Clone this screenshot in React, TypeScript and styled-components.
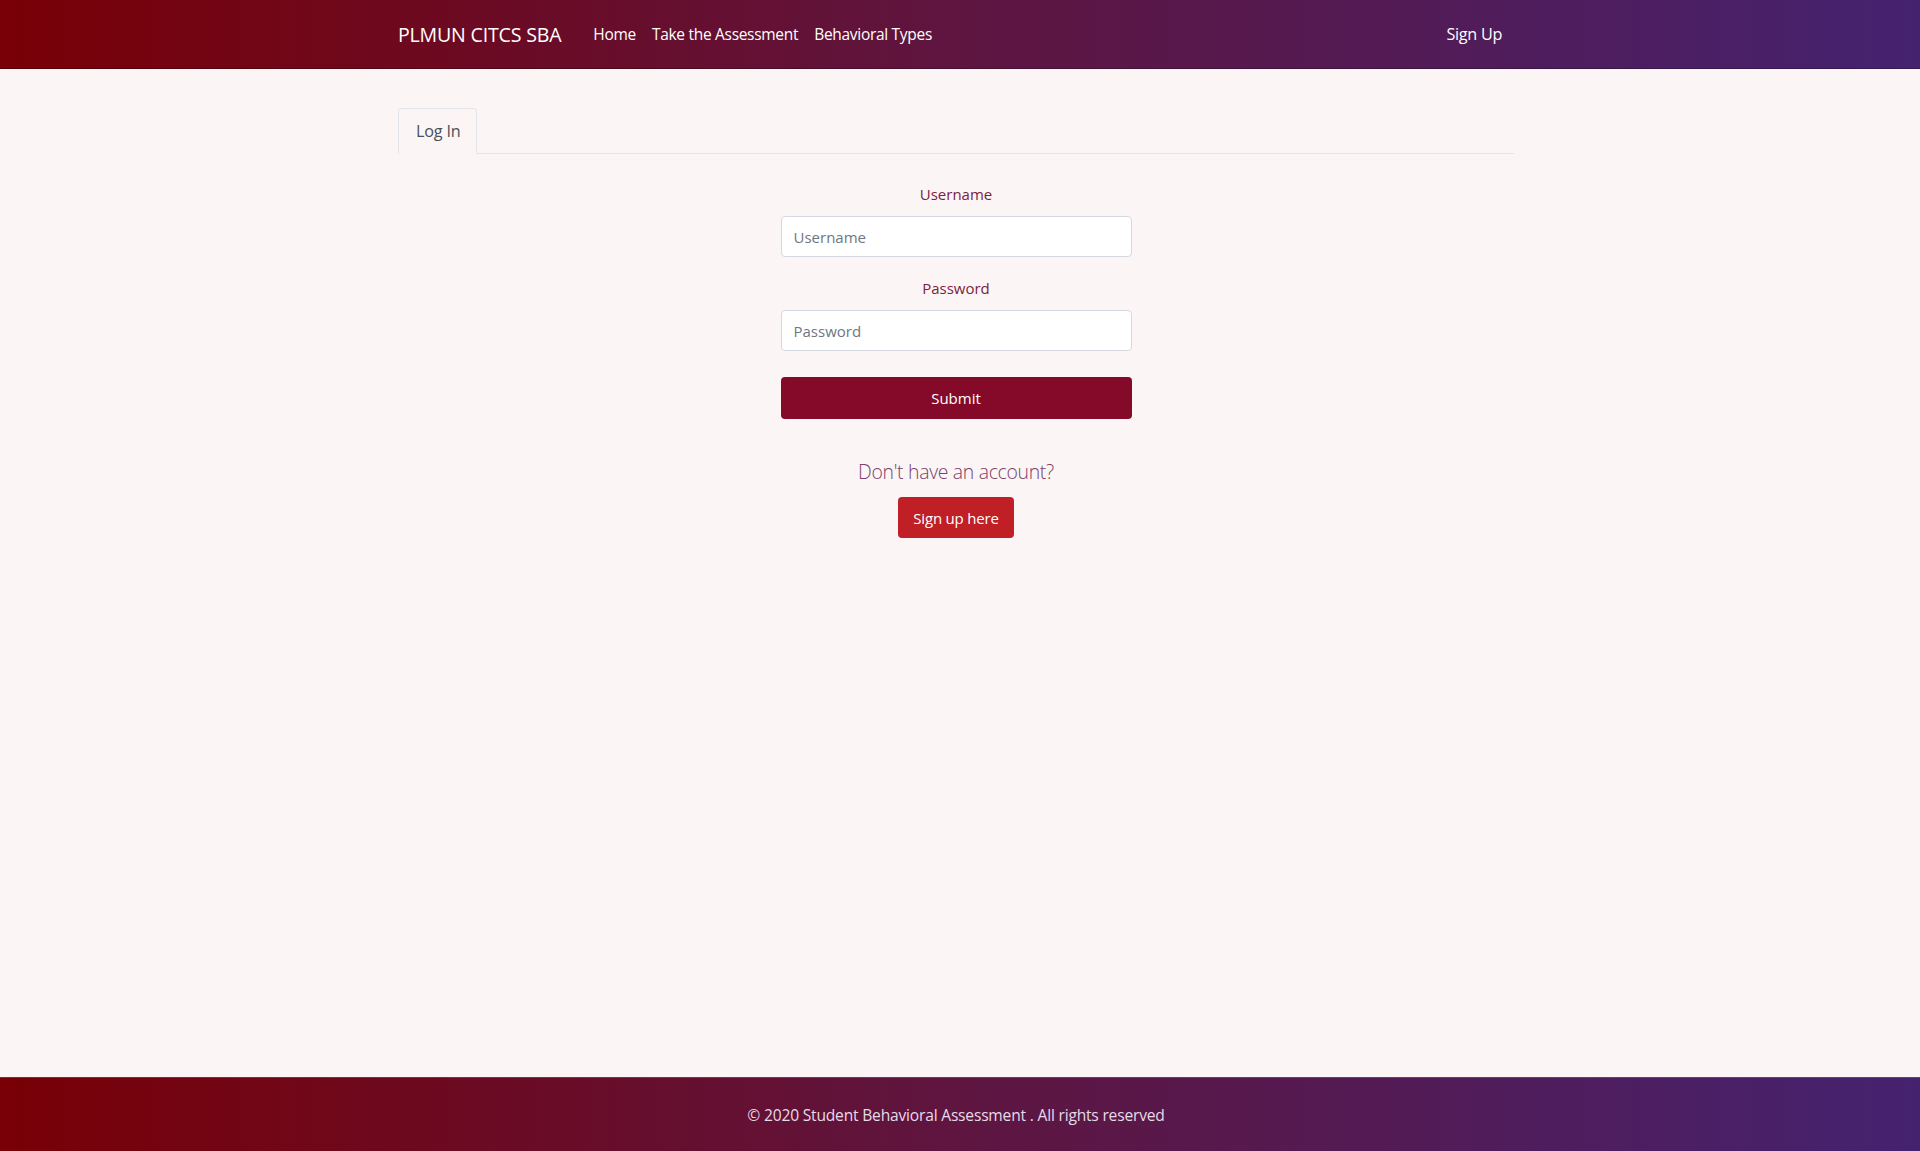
import React from "react";
import styled, { createGlobalStyle } from "styled-components";

const GlobalStyle = createGlobalStyle`
  html, body { margin: 0; padding: 0; }
  body {
    background: #fcf5f5;
    font-family: "Open Sans", "Noto Sans", Arial, sans-serif;
    font-size: 15px;
    color: #212529;
  }
  * { box-sizing: border-box; }
`;

const gradient = "linear-gradient(90deg, #780006 0%, #5e1540 50%, #45226f 100%)";

const Page = styled.div`
  min-height: 1151px;
  display: flex;
  flex-direction: column;
`;

const NavBar = styled.header`
  height: 69px;
  background: ${gradient};
  border-bottom: 1px solid rgba(0, 0, 0, 0.25);
  display: flex;
  align-items: center;
  padding-right: 8px;
`;

const Container = styled.div`
  width: 1116px;
  margin: 0 auto;
`;

const NavInner = styled(Container)`
  display: flex;
  align-items: center;
`;

const Brand = styled.a`
  color: #fff;
  font-size: 19.6px;
  margin-right: 24px;
  letter-spacing: -0.2px;
  text-decoration: none;
`;

const NavLinks = styled.nav`
  display: flex;
  align-items: center;
  flex: 1;
`;

const NavLink = styled.a<{ $right?: boolean }>`
  color: #fff;
  font-size: 15.5px;
  padding: 0 8px;
  letter-spacing: -0.3px;
  text-decoration: none;
  margin-left: ${(p) => (p.$right ? "auto" : "0")};
  margin-right: ${(p) => (p.$right ? "4px" : "0")};
  &:last-child { font-size: 16.2px; }
`;

const Main = styled.main`
  flex: 1;
  padding-top: 39px;
  padding-right: 8px;
`;

const Tabs = styled.div`
  display: flex;
  border-bottom: 1px solid #e3e4ea;
`;

const Tab = styled.div`
  padding: 10px 16px 10px 17px;
  line-height: 24px;
  color: #495057;
  font-size: 16.2px;
  letter-spacing: -0.2px;
  border: 1px solid #e3e4ea;
  border-bottom-color: #fcf5f5;
  border-radius: 4px 4px 0 0;
  margin-bottom: -1px;
`;

const Form = styled.form`
  width: 351px;
  margin: 28px auto 0;
  display: flex;
  flex-direction: column;
  align-items: stretch;
`;

const Group = styled.div`
  display: flex;
  flex-direction: column;
  align-items: center;
  margin-bottom: 19px;
`;

const Label = styled.label`
  color: #7a1d3e;
  font-size: 15px;
  line-height: 24px;
  margin-bottom: 10px;
`;

const Input = styled.input`
  width: 100%;
  height: 41px;
  border: 1px solid #d5d8de;
  border-radius: 4px;
  background: #fff;
  padding: 0 12px;
  font-family: inherit;
  font-size: 15px;
  color: #495057;
  &::placeholder { color: #6f7682; }
`;

const SubmitButton = styled.button`
  margin-top: 7px;
  height: 42px;
  width: 100%;
  background: #850a29;
  border: none;
  border-radius: 4px;
  color: #fff;
  font-family: inherit;
  font-size: 15px;
`;

const SignupBlock = styled.div`
  display: flex;
  flex-direction: column;
  align-items: center;
  margin-top: 38px;
`;

const Lead = styled.p`
  margin: 0 0 10px;
  font-size: 19.4px;
  line-height: 30px;
  font-weight: 300;
  color: #7a3f6a;
  letter-spacing: -0.3px;
`;

const DangerButton = styled.button`
  height: 41px;
  padding: 0 12px;
  width: 116px;
  background: #c01f26;
  border: none;
  border-radius: 4px;
  color: #fff;
  font-family: inherit;
  font-size: 15px;
  letter-spacing: -0.2px;
`;

const Footer = styled.footer`
  height: 74px;
  background: ${gradient};
  border-top: 1px solid rgba(255, 255, 255, 0.15);
  display: flex;
  align-items: center;
  justify-content: center;
  padding-right: 8px;
  color: #e6dbe6;
  font-size: 15.6px;
  letter-spacing: -0.2px;
`;

export default function App() {
  return (
    <Page>
      <GlobalStyle />
      <NavBar>
        <NavInner>
          <Brand href="#">PLMUN CITCS SBA</Brand>
          <NavLinks>
            <NavLink href="#">Home</NavLink>
            <NavLink href="#">Take the Assessment</NavLink>
            <NavLink href="#">Behavioral Types</NavLink>
            <NavLink href="#" $right>Sign Up</NavLink>
          </NavLinks>
        </NavInner>
      </NavBar>
      <Main>
        <Container>
          <Tabs>
            <Tab>Log In</Tab>
          </Tabs>
          <Form onSubmit={(e) => e.preventDefault()}>
            <Group>
              <Label htmlFor="username">Username</Label>
              <Input id="username" placeholder="Username" />
            </Group>
            <Group>
              <Label htmlFor="password">Password</Label>
              <Input id="password" type="password" placeholder="Password" />
            </Group>
            <SubmitButton type="submit">Submit</SubmitButton>
          </Form>
          <SignupBlock>
            <Lead>Don't have an account?</Lead>
            <DangerButton>Sign up here</DangerButton>
          </SignupBlock>
        </Container>
      </Main>
      <Footer>© 2020 Student Behavioral Assessment . All rights reserved</Footer>
    </Page>
  );
}
